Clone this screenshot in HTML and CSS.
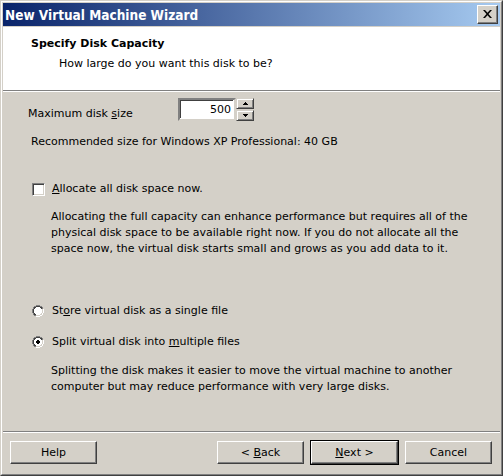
FILE: index.html
```html
<!DOCTYPE html>
<html>
<head>
<meta charset="utf-8">
<link rel="stylesheet" href="styles.css">
</head>
<body>
<div class="window">
  <div class="frame">
    <div class="titlebar">
      <span class="title">New Virtual Machine Wizard</span>
      <span class="close">
        <svg width="9" height="8" viewBox="0 0 9 8"><path d="M0 0h2l2.5 2.7L7 0h2L5.5 4 9 8H7L4.5 5.3 2 8H0l3.5-4z" fill="#000"/></svg>
      </span>
    </div>
    <div class="header">
      <div class="h-title">Specify Disk Capacity</div>
      <div class="h-sub">How large do you want this disk to be?</div>
    </div>
    <div class="sep"></div>
    <div class="content">
      <div class="size-row">
        <div class="size-label">Maximum disk <u>s</u>ize (GB):</div>
        <div class="spinner">
          <div class="spin-input">500</div>
          <div class="spin-btns">
            <div class="spin-btn"><svg width="5" height="3" viewBox="0 0 5 3"><path d="M2 0h1v1h1v1h1v1H0V2h1V1h1z" fill="#000"/></svg></div>
            <div class="spin-btn"><svg width="5" height="3" viewBox="0 0 5 3"><path d="M0 0h5v1H4v1H3v1H2V2H1V1H0z" fill="#000"/></svg></div>
          </div>
        </div>
      </div>
      <div class="recommend">Recommended size for Windows XP Professional: 40 GB</div>
      <div class="option check-row">
        <span class="checkbox"></span>
        <span class="opt-label"><u>A</u>llocate all disk space now.</span>
      </div>
      <p class="desc">Allocating the full capacity can enhance performance but requires all of the<br>physical disk space to be available right now. If you do not allocate all the<br>space now, the virtual disk starts small and grows as you add data to it.</p>
      <div class="option radio-row first-radio">
        <svg class="radio" width="12" height="12" viewBox="0 0 12 12">
          <path d="M4 0h4v1h2v1h1v2h1v4h-1v2h-1v1H8v1H4v-1H2v-1H1V8H0V4h1V2h1V1h2z" fill="#808080"/>
          <path d="M4 1h4v1h2v2h1v4h-1v2H8v1H4v-1H2V8H1V4h1V2h2z" fill="#404040"/>
          <path d="M4 2h4v1h1v1h1v4h-1v1H8v1H4v-1H3V8H2V4h1V3h1z" fill="#fff"/>
          <path d="M10 4h1v4h-1v2H8v1H4v-1h4V9h1V8h1z" fill="#d4d0c8"/>
          <path d="M11 4h1v4h-1v2h-1v1H8v1H4v-1h4v-1h2V8h1z" fill="#fff"/>
        </svg>
        <span class="opt-label">St<u>o</u>re virtual disk as a single file</span>
      </div>
      <div class="option radio-row second-radio">
        <svg class="radio" width="12" height="12" viewBox="0 0 12 12">
          <path d="M4 0h4v1h2v1h1v2h1v4h-1v2h-1v1H8v1H4v-1H2v-1H1V8H0V4h1V2h1V1h2z" fill="#808080"/>
          <path d="M4 1h4v1h2v2h1v4h-1v2H8v1H4v-1H2V8H1V4h1V2h2z" fill="#404040"/>
          <path d="M4 2h4v1h1v1h1v4h-1v1H8v1H4v-1H3V8H2V4h1V3h1z" fill="#fff"/>
          <path d="M10 4h1v4h-1v2H8v1H4v-1h4V9h1V8h1z" fill="#d4d0c8"/>
          <path d="M11 4h1v4h-1v2h-1v1H8v1H4v-1h4v-1h2V8h1z" fill="#fff"/>
          <path d="M5 4h2v1h1v2H7v1H5V7H4V5h1z" fill="#000"/>
        </svg>
        <span class="opt-label">Split virtual disk into <u>m</u>ultiple files</span>
      </div>
      <p class="desc desc2">Splitting the disk makes it easier to move the virtual machine to another<br>computer but may reduce performance with very large disks.</p>
    </div>
    <div class="sep"></div>
    <div class="buttons">
      <button class="btn">Help</button>
      <div class="spacer"></div>
      <button class="btn">&lt; <u>B</u>ack</button>
      <button class="btn default"><u>N</u>ext &gt;</button>
      <button class="btn">Cancel</button>
    </div>
  </div>
</div>
</body>
</html>
```

FILE: styles.css
```css
html, body {
  margin: 0;
  padding: 0;
  background: #d4d0c8;
}
body {
  font-family: "DejaVu Sans", Verdana, sans-serif;
  font-size: 11px;
  color: #000;
}
.window {
  width: 503px;
  height: 476px;
  box-sizing: border-box;
  border: 1px solid;
  border-color: #d4d0c8 #404040 #404040 #d4d0c8;
}
.frame {
  height: 100%;
  box-sizing: border-box;
  border: 1px solid;
  border-color: #fff #808080 #808080 #fff;
  padding: 1px;
  display: flex;
  flex-direction: column;
}
.titlebar {
  height: 23px;
  flex: none;
  background: linear-gradient(to right, #0a246a, #a6caf0);
  display: flex;
  align-items: center;
  justify-content: space-between;
  padding: 0 2px 0 2px;
  margin-bottom: 1px;
}
.title {
  color: #fff;
  font-weight: bold;
  font-size: 13.5px;
  font-stretch: condensed;
}
.close {
  width: 21px;
  height: 19px;
  box-sizing: border-box;
  background: #d4d0c8;
  border: 1px solid;
  border-color: #fff #404040 #404040 #fff;
  box-shadow: inset -1px -1px 0 #808080;
  display: flex;
  align-items: center;
  justify-content: center;
  padding-bottom: 1px;
}
.header {
  background: #fff;
  height: 63px;
  flex: none;
  box-sizing: border-box;
  padding: 10px 0 0 28px;
  line-height: 13px;
}
.h-title {
  font-weight: bold;
}
.h-sub {
  margin-top: 7px;
  padding-left: 28px;
}
.sep {
  height: 1px;
  flex: none;
  background: #808080;
  border-bottom: 1px solid #fff;
}
.content {
  flex: 1;
  padding: 6px 0 0 25px;
  line-height: 16px;
}
.size-row {
  display: flex;
  align-items: flex-start;
}
.size-label {
  width: 150px;
  height: 27px;
  overflow: hidden;
  padding-top: 8px;
  padding-right: 30px;
  box-sizing: border-box;
}
.spinner {
  display: flex;
}
.spin-input {
  width: 58px;
  height: 23px;
  box-sizing: border-box;
  background: #fff;
  border: 2px solid;
  border-color: #808080 #d4d0c8 #d4d0c8 #808080;
  box-shadow: -1px -1px 0 0 #fff inset, 1px 1px 0 0 #404040 inset;
  text-align: right;
  padding-right: 3px;
  line-height: 19px;
}
.spin-btns {
  display: flex;
  flex-direction: column;
}
.spin-btn {
  width: 18px;
  height: 11px;
  box-sizing: border-box;
  border: 1px solid;
  border-color: #d4d0c8 #404040 #404040 #d4d0c8;
  box-shadow: inset 1px 1px 0 #fff, inset -1px -1px 0 #808080;
  display: flex;
  align-items: center;
  justify-content: center;
  margin-bottom: 1px;
}
.recommend {
  margin-top: 9px;
  padding-left: 3px;
}
.option {
  display: flex;
  align-items: center;
  padding-left: 4px;
}
.check-row {
  margin-top: 31px;
}
.checkbox {
  width: 13px;
  height: 13px;
  box-sizing: border-box;
  background: #fff;
  border: 1px solid;
  border-color: #808080 #fff #fff #808080;
  box-shadow: inset 1px 1px 0 #404040, inset -1px -1px 0 #d4d0c8;
  margin-right: 7px;
}
.radio {
  margin-right: 8px;
  flex: none;
}
.desc {
  margin: 12px 0 0 23px;
}
.first-radio {
  margin-top: 46px;
}
.second-radio {
  margin-top: 15px;
}
.desc2 {
  margin-top: 13px;
}
.buttons {
  flex: none;
  height: 40px;
  box-sizing: border-box;
  padding: 8px 8px 0 7px;
  display: flex;
  gap: 7px;
  align-items: flex-start;
}
.spacer {
  flex: 1;
}
.btn {
  width: 87px;
  height: 23px;
  box-sizing: border-box;
  font: inherit;
  color: #000;
  background: #d4d0c8;
  border: 1px solid;
  border-color: #fff #404040 #404040 #fff;
  box-shadow: inset -1px -1px 0 #808080;
  padding: 0;
  margin: 0;
}
.btn.default {
  outline: 1px solid #000;
}
```
